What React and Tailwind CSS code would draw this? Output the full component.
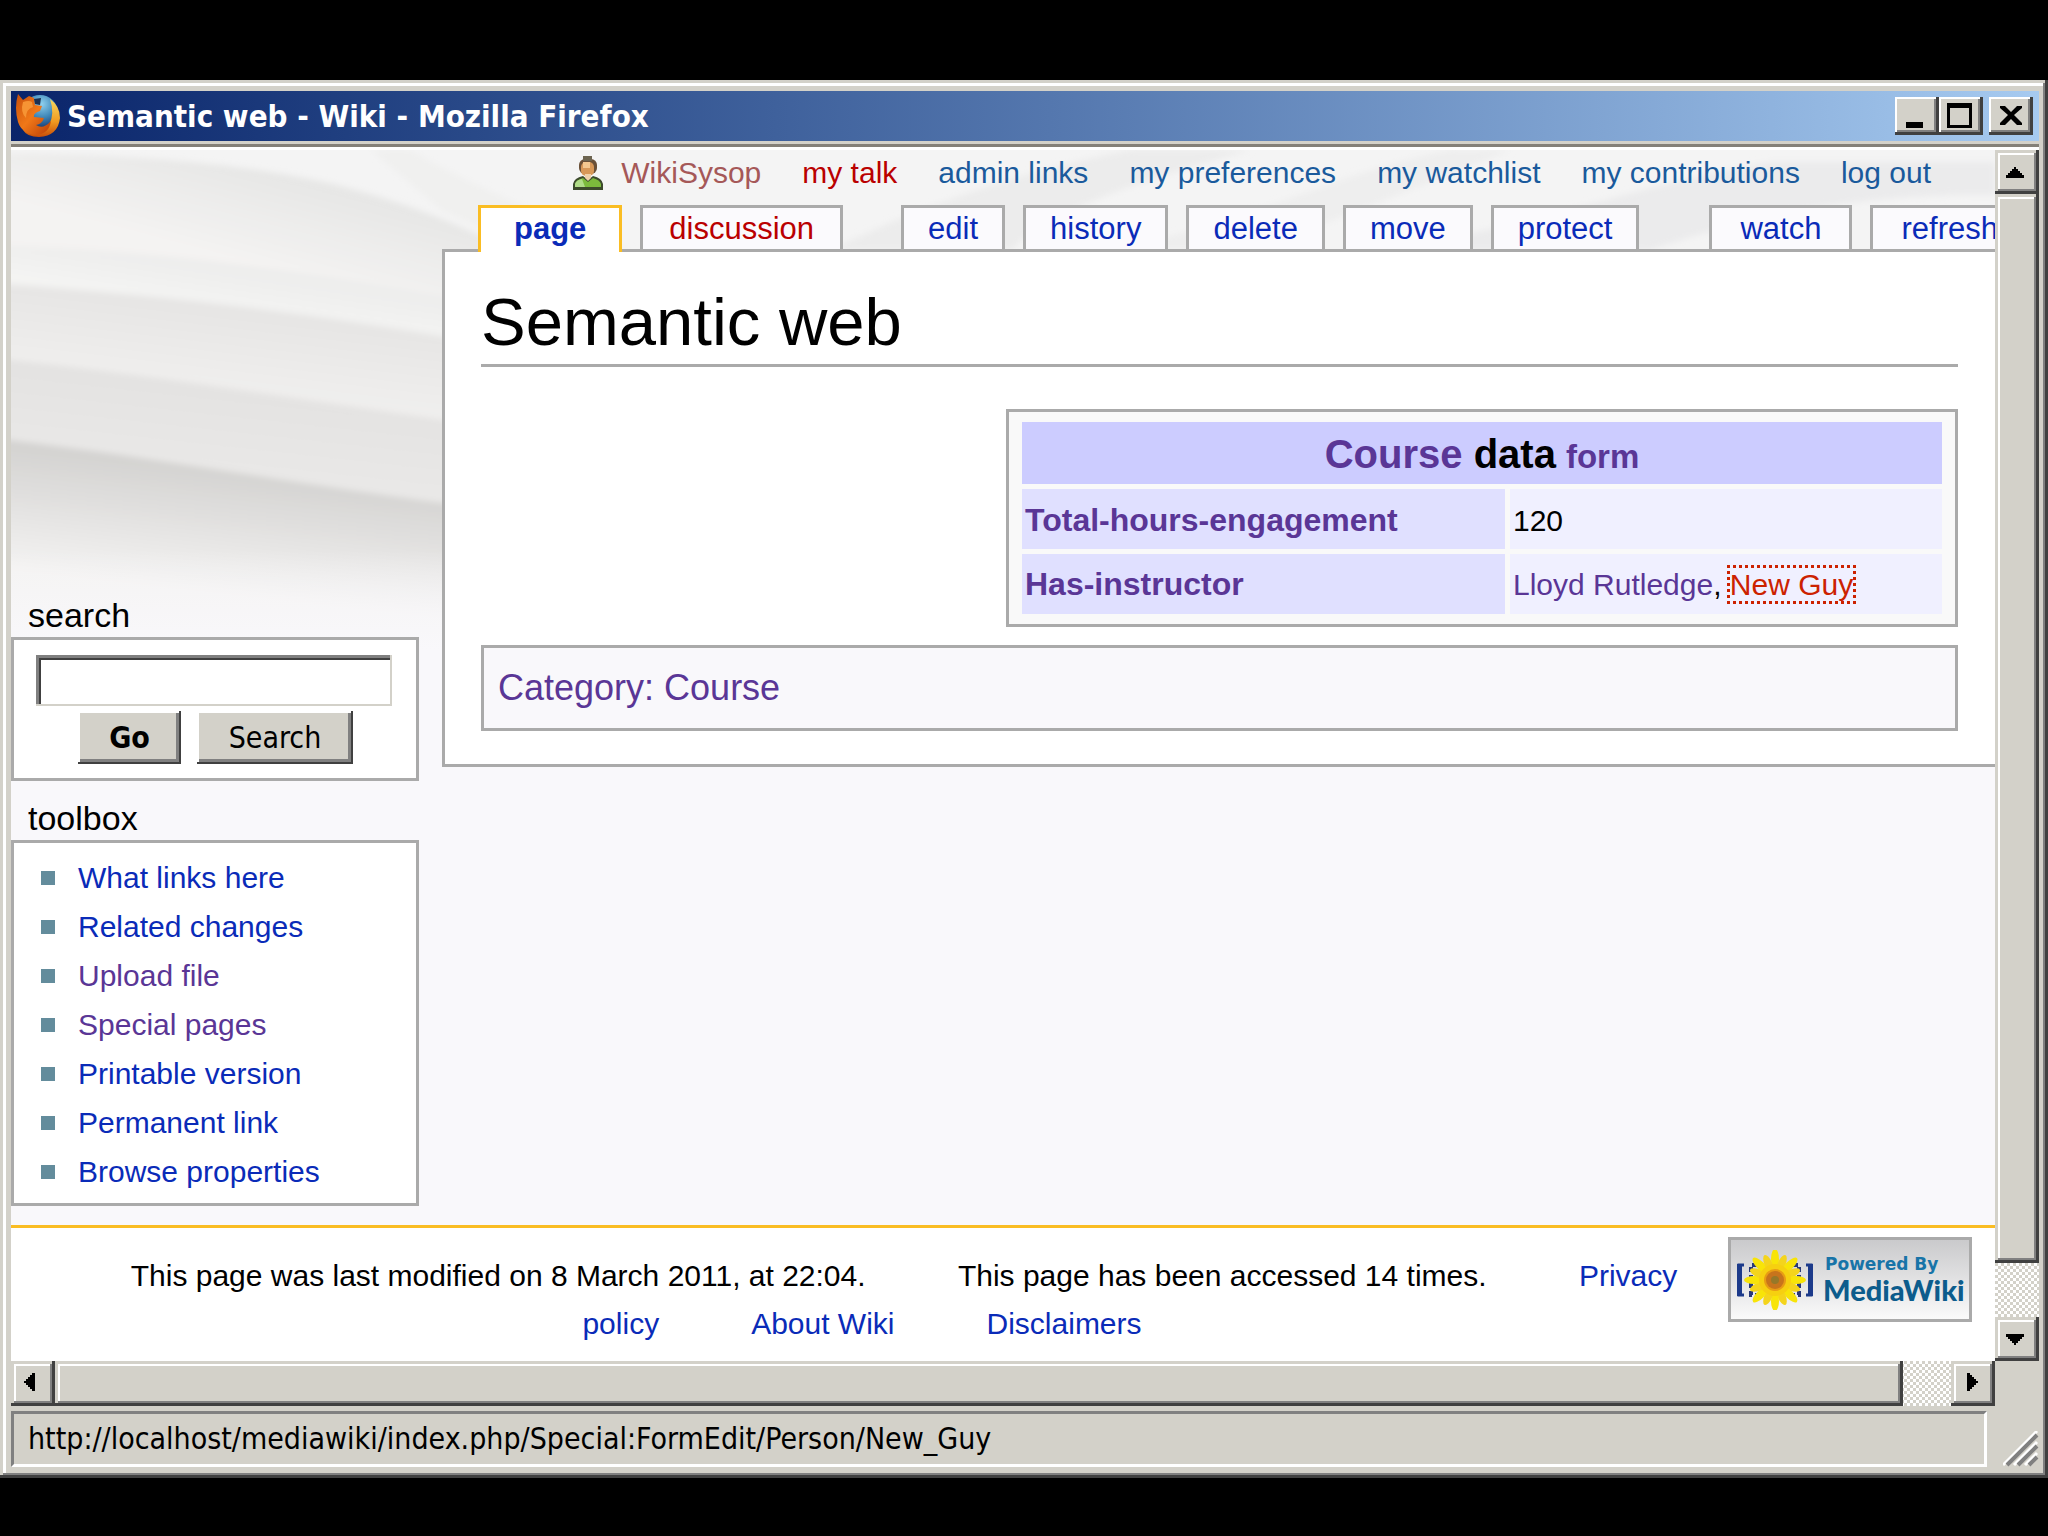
// App.jsx
import React from 'react';

const PERSONAL = [
  { label: 'WikiSysop', color: 'text-[#a55858]' },
  { label: 'my talk', color: 'text-[#ba0000]' },
  { label: 'admin links', color: 'text-[#1a5a9c]' },
  { label: 'my preferences', color: 'text-[#1a5a9c]' },
  { label: 'my watchlist', color: 'text-[#1a5a9c]' },
  { label: 'my contributions', color: 'text-[#1a5a9c]' },
  { label: 'log out', color: 'text-[#1a5a9c]' },
];

const ACTION_TABS = ['edit', 'history', 'delete', 'move', 'protect'];
const USER_TABS = ['watch', 'refresh'];

const TOOLBOX = [
  { label: 'What links here' },
  { label: 'Related changes' },
  { label: 'Upload file', visited: true },
  { label: 'Special pages', visited: true },
  { label: 'Printable version' },
  { label: 'Permanent link' },
  { label: 'Browse properties' },
];

const RAISED =
  'bg-[#d3d1c9] shadow-[inset_-3px_-3px_#404040,inset_3px_3px_#d3d1c9,inset_-5px_-5px_#808080,inset_5px_5px_#ffffff]';
const CAPTION =
  'flex h-[38px] w-11 items-center justify-center bg-[#d3d1c9] shadow-[inset_-3px_-3px_#404040,inset_2px_2px_#ffffff,inset_-5px_-5px_#808080]';
const TRACK =
  'bg-[repeating-conic-gradient(#d3d1c9_0_25%,#ffffff_0_50%)] bg-[length:6px_6px]';
const UI_FONT = "font-['DejaVu_Sans_Condensed','DejaVu_Sans',sans-serif]";

function FirefoxIcon() {
  return (
    <svg viewBox="0 0 46 44" className="h-11 w-[46px] shrink-0" aria-hidden="true">
      <defs>
        <radialGradient id="globe" cx="55%" cy="25%" r="75%">
          <stop offset="0" stopColor="#8fd0ee" />
          <stop offset="0.5" stopColor="#3d86b8" />
          <stop offset="1" stopColor="#12285e" />
        </radialGradient>
        <linearGradient id="fur" x1="0" y1="0" x2="1" y2="1">
          <stop offset="0" stopColor="#c8500c" />
          <stop offset="0.5" stopColor="#f07818" />
          <stop offset="1" stopColor="#b83c06" />
        </linearGradient>
        <linearGradient id="tail" x1="0" y1="0" x2="0" y2="1">
          <stop offset="0" stopColor="#f6d860" />
          <stop offset="0.6" stopColor="#f09a20" />
          <stop offset="1" stopColor="#c84c08" />
        </linearGradient>
      </defs>
      <circle cx="25" cy="19" r="18" fill="url(#globe)" />
      <path d="M35 5 Q45 12 45 24 Q43 42 24 43 Q12 43 8 36 Q26 42 34 31 Q40 20 35 5Z" fill="url(#tail)" />
      <path
        d="M3 0 L8 6 L14 2 L19 4 L20 11 L27 12 L25 17 Q18 19 19 23 L29 24 Q27 30 21 31 Q28 36 36 27 Q34 40 21 41 Q7 40 3 28 Q-1 14 3 0Z"
        fill="url(#fur)"
      />
      <path d="M8 8 Q14 6 17 8 L18 13 Q11 15 11 24 Q5 18 8 8Z" fill="#f69434" />
      <path d="M19 5 L26 4 L25 11 L20 10Z" fill="#1c3050" />
    </svg>
  );
}

function UserIcon() {
  return (
    <svg viewBox="0 0 30 34" className="h-[34px] w-[30px] shrink-0" aria-hidden="true">
      <path d="M0 34 V28 Q1 22 10 20 L15 24 L20 20 Q29 22 30 28 V34Z" fill="#3c4a2c" />
      <path d="M2 31 V28 Q3 24 10 22 L15 26 L20 22 Q27 24 28 28 V31Z" fill="#7cba3c" />
      <path d="M2 31 V28 Q3 24 9 23 L12 31Z" fill="#b0dc88" />
      <rect x="6" y="3" width="18" height="15" rx="6" fill="#6a5038" />
      <rect x="10" y="0" width="9" height="5" fill="#6c6450" />
      <rect x="8" y="6" width="13" height="14" rx="5" fill="#d89858" />
      <rect x="10" y="6" width="7" height="6" fill="#f4c890" />
      <path d="M12 18 H18 V22 L15 25 L12 22Z" fill="#f0d0a8" />
    </svg>
  );
}

function Sunflower() {
  const petals = Array.from({ length: 16 }, (_, i) => i * 22.5);
  return (
    <svg viewBox="0 0 80 60" className="h-15 w-20 shrink-0" aria-hidden="true">
      <g fill="none" stroke="#1c3a8a" strokeWidth="3">
        <path d="M9 15 H4 V45 H9" />
        <path d="M71 15 H76 V45 H71" />
      </g>
      <g fill="#1c3a8a">
        <rect x="2" y="14" width="5" height="32" />
        <rect x="73" y="14" width="5" height="32" />
      </g>
      <g fill="none" stroke="#283878" strokeWidth="4" strokeDasharray="5 3">
        <path d="M22 15 H16 V45 H22" />
        <path d="M58 15 H64 V45 H58" />
      </g>
      {petals.map((a, i) => (
        <ellipse
          key={a}
          cx="40"
          cy={i % 2 ? 13 : 9}
          rx="4"
          ry="10"
          fill={i % 2 ? '#f4d41c' : '#f8e408'}
          transform={`rotate(${a} 40 30)`}
        />
      ))}
      <circle cx="40" cy="30" r="16" fill="#f6d010" />
      <circle cx="40" cy="30" r="11" fill="#e89c14" />
      <circle cx="40" cy="30" r="9" fill="#c8741c" />
      <circle cx="40" cy="30" r="4" fill="#967828" />
    </svg>
  );
}

// Soft paper folds behind the sidebar and the tab bar
function HeaderBackdrop() {
  return (
    <svg
      viewBox="0 0 1984 500"
      preserveAspectRatio="none"
      className="absolute inset-x-0 top-0 h-[500px] w-full"
      aria-hidden="true"
    >
      <defs>
        <linearGradient id="foldA" gradientUnits="userSpaceOnUse" x1="200" y1="12" x2="178" y2="96">
          <stop offset="0" stopColor="#e7e7e6" />
          <stop offset="1" stopColor="#f4f3f2" />
        </linearGradient>
        <linearGradient id="foldB" gradientUnits="userSpaceOnUse" x1="200" y1="108" x2="193" y2="155">
          <stop offset="0" stopColor="#ececeb" />
          <stop offset="1" stopColor="#f4f4f3" />
        </linearGradient>
        <linearGradient id="foldC" gradientUnits="userSpaceOnUse" x1="200" y1="148" x2="190" y2="232">
          <stop offset="0" stopColor="#e5e4e3" />
          <stop offset="1" stopColor="#efeeed" />
        </linearGradient>
        <linearGradient id="foldD" gradientUnits="userSpaceOnUse" x1="200" y1="230" x2="190" y2="320">
          <stop offset="0" stopColor="#e3e2e1" />
          <stop offset="1" stopColor="#e9e8e7" />
        </linearGradient>
        <linearGradient id="foldE" gradientUnits="userSpaceOnUse" x1="200" y1="314" x2="186" y2="440">
          <stop offset="0" stopColor="#d3d2d0" />
          <stop offset="0.5" stopColor="#e3e2e1" />
          <stop offset="1" stopColor="#f4f3f2" />
        </linearGradient>
        <linearGradient id="fade" x1="0" y1="0" x2="0" y2="1">
          <stop offset="0" stopColor="#f9f8fb" stopOpacity="0" />
          <stop offset="1" stopColor="#f9f8fb" />
        </linearGradient>
        <filter id="soft" x="-5%" y="-5%" width="110%" height="110%">
          <feGaussianBlur stdDeviation="3" />
        </filter>
      </defs>
      <rect width="1984" height="500" fill="#f4f4f4" />
      <g filter="url(#soft)">
        <path d="M-20 3 C120 4 240 14 330 36 C400 54 450 76 500 100 V170 H-20Z" fill="url(#foldA)" />
        <path d="M-20 95 C130 100 290 118 500 160 V220 H-20Z" fill="url(#foldB)" />
        <path d="M-20 133 C140 144 290 160 500 198 V300 H-20Z" fill="url(#foldC)" />
        <path d="M-20 208 C140 224 290 250 500 280 V400 H-20Z" fill="url(#foldD)" />
        <path d="M-20 288 C140 306 290 336 500 362 V520 H-20Z" fill="url(#foldE)" />
        <path d="M360 0 L430 60 L520 100 H620 C540 70 450 30 400 0Z" fill="#f0f0ef" />
        <path d="M820 100 C900 60 1010 20 1120 0 H1240 C1130 30 1040 60 1000 100Z" fill="#ececec" />
        <path d="M1100 100 C1250 70 1330 20 1440 0 H1500 C1400 40 1300 80 1240 100Z" fill="#eeeeee" />
        <path d="M1360 100 C1520 80 1640 30 1760 12 H1984 V45 C1840 44 1740 66 1640 100Z" fill="#ebebec" />
      </g>
      <rect y="400" width="1984" height="100" fill="url(#fade)" />
    </svg>
  );
}

function Arrow({ d }) {
  return (
    <svg viewBox="0 0 20 20" className="h-5 w-5" fill="#000" shapeRendering="crispEdges" aria-hidden="true">
      <path d={d} />
    </svg>
  );
}

function TitleBar() {
  return (
    <header className="flex h-[50px] items-center bg-linear-to-r from-[#0a246a] to-[#a6caf0] pr-1.5 pl-1">
      <FirefoxIcon />
      <h2 className={`flex-1 pl-1.5 text-[31px] leading-[50px] font-bold text-white ${UI_FONT}`}>
        Semantic web - Wiki - Mozilla Firefox
      </h2>
      <button type="button" aria-label="Minimize" className={CAPTION}>
        <svg viewBox="0 0 44 38" className="h-[38px] w-11" aria-hidden="true">
          <rect x="11" y="25" width="17" height="6" />
        </svg>
      </button>
      <button type="button" aria-label="Maximize" className={CAPTION}>
        <svg viewBox="0 0 44 38" className="h-[38px] w-11" aria-hidden="true">
          <path d="M8 6 H33 V31 H8Z M11 11 V28 H30 V11Z" fillRule="evenodd" />
        </svg>
      </button>
      <button type="button" aria-label="Close" className={`ml-1.5 ${CAPTION}`}>
        <svg viewBox="0 0 44 38" className="h-[38px] w-11" aria-hidden="true">
          <path d="M11 9 H16 L22 15 L28 9 H33 V11 L25 18 L33 26 V28 H28 L22 22 L16 28 H11 V26 L19 18 L11 11Z" />
        </svg>
      </button>
    </header>
  );
}

function Tab({ label, className }) {
  return (
    <a
      href="#"
      className={`border-[3px] border-b-0 border-[#aaaaaa] bg-[#fbfafd] text-[31px] leading-[41px] whitespace-nowrap ${className}`}
    >
      {label}
    </a>
  );
}

function Sidebar() {
  return (
    <aside className="w-[431px] shrink-0 pt-[444px] pb-[19px]">
      <div className="w-[408px]">
        <label htmlFor="search" className="block pl-[17px] text-[34px] leading-[43px]">search</label>
        <form className="border-[3px] border-[#aaaaaa] bg-white pt-[15px] pb-3.5 pl-[22px]">
          <input
            id="search"
            type="text"
            className="block h-[51px] w-[356px] bg-white px-2 text-[30px] shadow-[inset_-2px_-2px_#d3d1c9,inset_3px_3px_#808080,inset_5px_5px_#404040] outline-none"
          />
          <div className={`mt-[5px] flex gap-4 pl-[42px] text-[30px] leading-[53px] ${UI_FONT}`}>
            <button
              type="button"
              className="w-[103px] bg-[#d3d1c9] font-bold shadow-[inset_-2px_-2px_#404040,inset_2px_2px_#ffffff,inset_-5px_-5px_#808080]"
            >
              Go
            </button>
            <button
              type="button"
              className="w-[156px] bg-[#d3d1c9] shadow-[inset_-2px_-2px_#404040,inset_2px_2px_#ffffff,inset_-5px_-5px_#808080]"
            >
              Search
            </button>
          </div>
        </form>

        <h5 className="mt-4 pl-[17px] text-[34px] leading-[43px]">toolbox</h5>
        <ul className="border-[3px] border-[#aaaaaa] bg-white pt-2.5 pb-[7px] pl-[27px]">
          {TOOLBOX.map(t => (
            <li key={t.label} className="flex items-center gap-[23px] text-[30px] leading-[49px]">
              <span className="h-3.5 w-3.5 bg-[#638c9c]" />
              <a href="#" className={t.visited ? 'text-[#5a3696]' : 'text-[#0a2bb8]'}>{t.label}</a>
            </li>
          ))}
        </ul>
      </div>
    </aside>
  );
}

function CourseTable() {
  return (
    <div className="ml-auto w-[952px] border-[3px] border-[#aaaaaa] bg-[#f9f9f9] px-2 py-[5px]">
      <table className="w-full border-separate border-spacing-[5px] text-left text-[30px]">
        <thead>
          <tr>
            <th colSpan={2} className="h-[62px] bg-[#ccccff] pt-1 text-center text-[40px] leading-[50px]">
              <a href="#" className="text-[#5a3696]">Course</a> data
              <a href="#" className="pl-2.5 text-[33px] text-[#5a3696]">form</a>
            </th>
          </tr>
        </thead>
        <tbody>
          <tr>
            <th className="h-15 w-[483px] bg-[#e0e0ff] pt-0.5 pl-[3px] text-[32px]">
              <a href="#" className="text-[#5a3696]">Total-hours-engagement</a>
            </th>
            <td className="bg-[#f0f0ff] pt-0.5 pl-[3px]">120</td>
          </tr>
          <tr>
            <th className="h-15 bg-[#e0e0ff] pl-[3px] text-[32px]">
              <a href="#" className="text-[#5a3696]">Has-instructor</a>
            </th>
            <td className="bg-[#f0f0ff] pl-[3px]">
              <a href="#" className="text-[#5a3696]">Lloyd Rutledge</a>,{' '}
              <a href="#" className="text-[#cc2200] outline-[3px] outline-[#cc2200] outline-dotted">New Guy</a>
            </td>
          </tr>
        </tbody>
      </table>
    </div>
  );
}

function Content() {
  return (
    <div className="min-w-0 flex-1 overflow-hidden">
      <nav className="flex items-center justify-end gap-[41px] pr-16 pb-[9px] text-[30px] leading-[46px] whitespace-nowrap">
        {PERSONAL.map((p, i) => (
          <a key={p.label} href="#" className={`flex items-center gap-[18px] ${p.color}`}>
            {i === 0 && <UserIcon />}
            {p.label}
          </a>
        ))}
      </nav>

      <nav className="flex gap-[18px] pl-9 text-[#0a2bb8]">
        <a
          href="#"
          className="relative z-10 -mb-[3px] border-[3px] border-b-0 border-[#fabd23] bg-white px-[33px] text-[31px] leading-[41px] font-bold"
        >
          page
        </a>
        <Tab label="discussion" className="mr-10 px-[26px] text-[#ba0000]" />
        {ACTION_TABS.map(t => <Tab key={t} label={t} className="px-6" />)}
        <div className="ml-[52px] flex gap-[18px]">
          {USER_TABS.map(t => <Tab key={t} label={t} className="px-7" />)}
        </div>
      </nav>

      <main className="border-[3px] border-r-0 border-[#aaaaaa] bg-white pr-[37px] pb-[33px] pl-9">
        <h1 className="border-b-[3px] border-[#aaaaaa] pt-8 pb-[5px] text-[67px] leading-[75px]">Semantic web</h1>
        <div className="mt-[42px]">
          <CourseTable />
        </div>
        <p className="mt-[18px] border-[3px] border-[#aaaaaa] bg-[#f9f8fb] pl-3.5 text-[36px] leading-[80px] text-[#5a3696]">
          <a href="#">Category</a>: <a href="#">Course</a>
        </p>
      </main>
    </div>
  );
}

function Footer() {
  return (
    <footer className="relative flex items-start border-t-[3px] border-[#fabd23] bg-white pr-[23px] pb-[13px] pl-[27px] text-[30px] text-black">
      <p className="flex-1 pt-6 text-center leading-12">
        <span className="mx-[42px]">This page was last modified on 8 March 2011, at 22:04.</span>{' '}
        <span className="mx-[42px]">This page has been accessed 14 times.</span>{' '}
        <a href="#" className="ml-[42px] text-[#0a2bb8]">Privacy<br />policy</a>
        <a href="#" className="mx-[92px] text-[#0a2bb8]">About Wiki</a>
        <a href="#" className="mr-[42px] text-[#0a2bb8]">Disclaimers</a>
      </p>
      <a
        href="#"
        className="mt-[9px] flex h-[85px] w-[244px] items-center gap-2 border-[3px] border-[#aaaaaa] bg-linear-to-b from-[#cacacc] to-[#fafafa] pl-1 font-['DejaVu_Sans',sans-serif] font-bold text-[#0c5c8c]"
      >
        <Sunflower />
        <span className="whitespace-nowrap">
          <span className="block pl-0.5 text-[17px] leading-5 text-[#1874a8]">Powered By</span>
          <span className="block font-['Lato',sans-serif] text-[29px] leading-8 font-black">MediaWiki</span>
        </span>
      </a>
    </footer>
  );
}

export default function App() {
  return (
    <div className="flex min-h-screen flex-col bg-black pt-20 pb-[58px] font-['Liberation_Sans',Arial,sans-serif] text-black">
      <div className="flex flex-1 flex-col bg-[#d3d1c9] pt-[11px] pr-[9px] pb-[11px] pl-[11px] shadow-[inset_-3px_-3px_#404040,inset_3px_3px_#d3d1c9,inset_-5px_-5px_#808080,inset_6px_6px_#ffffff]">
        <TitleBar />
        <div className="mt-[3px] border-t-[3px] border-[#848078] bg-white pt-[3px]" />

        <div className="flex flex-1">
          <div className="relative flex min-w-0 flex-1 flex-col bg-[#f9f8fb]">
            <HeaderBackdrop />
            <div className="relative flex flex-1">
              <Sidebar />
              <Content />
            </div>
            <Footer />
          </div>
          {/* Vertical scrollbar */}
          <div className={`flex w-11 flex-col ${TRACK}`}>
            <button type="button" aria-label="Scroll up" className={`flex h-11 items-center justify-center pr-1 ${RAISED}`}>
              <Arrow d="M9 5 H11 V7 H13 V9 H15 V11 H17 V13 H19 V16 H1 V13 H3 V11 H5 V9 H7 V7 H9Z" />
            </button>
            <div className={`flex-1 ${RAISED}`} />
            <button type="button" aria-label="Scroll down" className={`mt-[54px] flex h-11 items-center justify-center pr-1 ${RAISED}`}>
              <Arrow d="M1 5 H19 V8 H17 V10 H15 V12 H13 V14 H11 V16 H9 V14 H7 V12 H5 V10 H3 V8 H1Z" />
            </button>
          </div>
        </div>

        {/* Horizontal scrollbar */}
        <div className={`mr-11 flex h-[45px] ${TRACK}`}>
          <button type="button" aria-label="Scroll left" className={`flex w-11 items-center justify-center pr-1 pb-1 ${RAISED}`}>
            <Arrow d="M14 1 V19 H11 V17 H9 V15 H7 V13 H5 V11 H3 V9 H5 V7 H7 V5 H9 V3 H11 V1Z" />
          </button>
          <div className={`flex-1 ${RAISED}`} />
          <button type="button" aria-label="Scroll right" className={`ml-12 flex w-11 items-center justify-center pr-1 pb-1 ${RAISED}`}>
            <Arrow d="M6 1 V19 H9 V17 H11 V15 H13 V13 H15 V11 H17 V9 H15 V7 H13 V5 H11 V3 H9 V1Z" />
          </button>
        </div>

        <div className="mt-[5px] flex items-end gap-4">
          <p
            className={`flex-1 border-[3px] border-t-[#808080] border-r-white border-b-white border-l-[#808080] pl-3.5 text-[30px] leading-[50px] ${UI_FONT}`}
          >
            http://localhost/mediawiki/index.php/Special:FormEdit/Person/New_Guy
          </p>
          <svg viewBox="0 0 36 36" className="h-9 w-9" aria-hidden="true">
            <g strokeWidth="3" stroke="#fff">
              <path d="M0 34 L34 0 M11 34 L34 11 M22 34 L34 22" />
            </g>
            <g strokeWidth="4" stroke="#808080">
              <path d="M4 34 L34 4 M15 34 L34 15 M26 34 L34 26" />
            </g>
          </svg>
        </div>
      </div>
    </div>
  );
}
